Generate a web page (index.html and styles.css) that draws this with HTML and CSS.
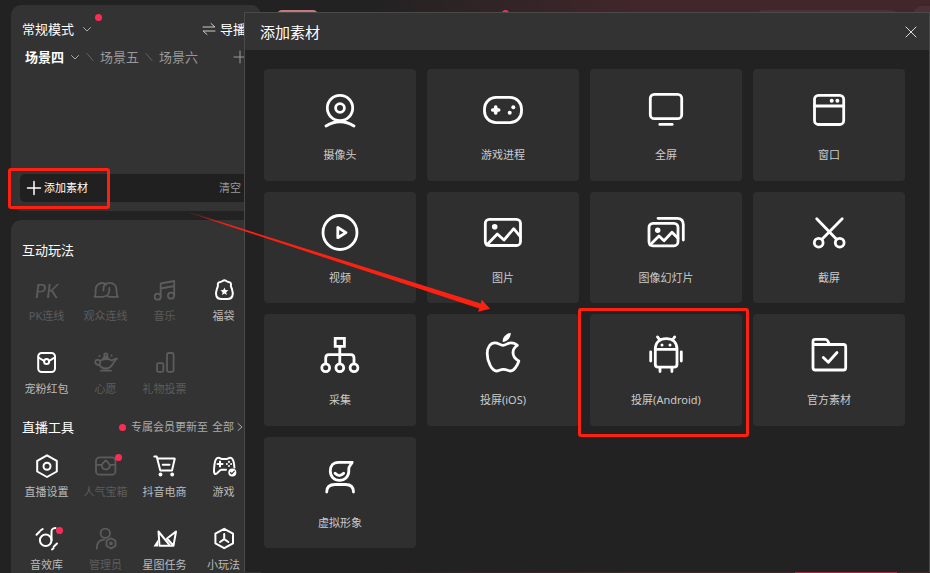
FILE: index.html
```html
<!DOCTYPE html>
<html lang="zh-CN">
<head>
<meta charset="utf-8">
<title>添加素材</title>
<link rel="stylesheet" href="styles.css">
</head>
<body>
<div class="app">
  <aside class="sidebar">
    <section class="panel scenes">
      <div class="mode-row">
        <button class="mode">常规模式
          <svg class="chevron" viewBox="0 0 10 10"><path d="M1.5 3.5 5 7l3.5-3.5"/></svg>
          <i class="dot dot-mode"></i>
        </button>
        <button class="director"><svg class="swap" viewBox="0 0 14 14"><path d="M1 5H13L9 1.5M13 9H1l4 3.5"/></svg>导播</button>
      </div>
      <div class="scene-row">
        <button class="scene current">场景四</button>
        <svg class="chevron" viewBox="0 0 10 10"><path d="M1.5 3.5 5 7l3.5-3.5"/></svg>
        <svg class="slash" viewBox="0 0 8 10"><path d="M1 1.5 7 8.5"/></svg>
        <button class="scene">场景五</button>
        <svg class="slash" viewBox="0 0 8 10"><path d="M1 1.5 7 8.5"/></svg>
        <button class="scene">场景六</button>
        <button class="add-scene" aria-label="+"><svg viewBox="0 0 12 12"><path d="M6 0V12M0 6H12"/></svg></button>
      </div>
      <div class="source-bar">
        <button class="add-source"><svg viewBox="0 0 14 14"><path d="M7 .5V13.5M.5 7H13.5"/></svg>添加素材</button>
        <button class="clear">清空</button>
      </div>
    </section>

    <section class="panel tools">
      <h2>互动玩法</h2>
      <div class="tool-grid">
        <button class="tool off"><span class="pk">PK</span>PK连线</button>
        <button class="tool off"><svg viewBox="0 0 27 28"><path d="M14.3 8.700C13.300 7.600 12 7 10 7 6.500 7 3.600 9.800 3.600 14 3.600 17 4 19.500 2.500 20.800H10.500C14.500 20.800 17.300 18 17.300 14V12M11.500 14.500V12.500C11.500 9 14 6.800 17.500 6.800 22 6.800 24.500 10 24.500 14 24.500 17 24.500 19 26 20.800H18.500C17 20.800 16 20.500 15.300 20"/></svg>观众连线</button>
        <button class="tool off"><svg viewBox="0 0 27 28"><circle cx="6.700" cy="20.700" r="3"/><circle cx="20" cy="19.700" r="3"/><path d="M9.700 20.500V7.500L23.200 5V19.500M9.700 12.500 23.200 10"/></svg>音乐</button>
        <button class="tool"><svg viewBox="0 0 27 28"><path d="M14.400 4.300c-1.700 0-2 1.400-4 1.600-2.200.2-3 1.500-2.500 3.400.3 1.200-.3 1.700-1 3.500-1.800 5.200-1 10.200 4.200 10.200h6.600c5.200 0 6-5 4.200-10.200-.7-1.800-1.300-2.300-1-3.500.5-1.900-.3-3.200-2.500-3.400-2-.2-2.300-1.600-4-1.600z"/><path class="solid" d="m14.400 11.500 1.100 2.500 2.800.3-2.100 1.900.6 2.700-2.400-1.400L12 18.900l.6-2.700-2.100-1.900 2.800-.3z"/></svg>福袋</button>
        <button class="tool"><svg viewBox="0 0 27 28"><rect x="5.200" y="4" width="16.800" height="19" rx="3.500"/><path d="M5.500 8.500 11 11.800M21.700 8.500 16.200 11.800"/><circle cx="13.600" cy="12.500" r="2.500"/></svg>宠粉红包</button>
        <button class="tool off"><svg viewBox="0 0 27 28"><path d="M8 12c3-2.500 9-2.500 12-.5 1.500-1.500 3-1.500 5-2-2 1.500-3 4-4.500 6-2 3-4 4-6.500 4s-5-.5-6.500-3.500C4.500 16 3 14.500 3.300 12.500 3.700 10 7 10.500 8 12c.3 1.500 0 3-.5 4M11 9.500c0-1.500 5.500-1.500 5.500 0M9 21.700h10"/><circle cx="13.800" cy="6" r="1.600"/><path d="M7.500 7v.2M19.500 6.500v.2"/></svg>心愿</button>
        <button class="tool off"><svg viewBox="0 0 27 28"><rect x="6" y="14.200" width="6.400" height="8.600" rx="1.500"/><rect x="16" y="4" width="6.600" height="18.800" rx="1.500"/></svg>礼物投票</button>
      </div>

      <div class="tools-head">
        <h2>直播工具</h2>
        <i class="dot"></i>
        <span class="notice">专属会员更新至</span>
        <a class="all" href="#">全部<svg viewBox="0 0 8 10"><path d="m2 1.500 4 3.500-4 3.500"/></svg></a>
      </div>
      <div class="tool-grid">
        <button class="tool"><svg viewBox="0 0 27 28"><path d="M14 3.300 23.800 8.800V19.500L14 25 4.200 19.500V8.800z"/><circle cx="14" cy="14.200" r="3.500"/></svg>直播设置</button>
        <button class="tool off"><svg viewBox="0 0 27 28"><rect x="4" y="5.300" width="19.400" height="17.400" rx="3.500"/><path d="M4 12.800H9.500M18 12.800h5.400M13.800 8.500c2 2 4 3 4 5a4 4 0 0 1-8 0c0-2 2-3 4-5z"/></svg><i class="dot dot-tool"></i>人气宝箱</button>
        <button class="tool"><svg viewBox="0 0 27 28"><path d="M3.300 4.500H5.700L9.300 18.500H21L23.800 6.600H7M11.700 12.700h6.800"/><circle class="solid" cx="9.500" cy="22.500" r="1.900"/><circle class="solid" cx="21.200" cy="22.500" r="1.900"/></svg>抖音电商</button>
        <button class="tool"><svg viewBox="0 0 27 28"><path d="M16 17.700H11.500C9 17.700 8 22 5.700 22 3.500 22 3.800 18 4.500 12.500 5 8 6 5.700 8.500 5.700c1.500 0 2 1.300 3.300 1.300h5c1.300 0 1.800-1.300 3.300-1.300 2.500 0 3.500 2.300 4 6.800l.3 3"/><path d="M10 9.500v5M7.500 12h5"/><path d="M19 9.800v.1M19 14v.1M16.900 12v.1M21.100 12v.1"/><circle class="solid" cx="22.300" cy="20.500" r="4"/><path class="cut" d="m20.500 20.500 1.300 1.400 2.500-2.700"/></svg>游戏</button>
        <button class="tool"><svg viewBox="0 0 27 28"><circle cx="12.700" cy="15.300" r="5.800"/><path d="M18.500 15.300V7c0-3 1-3.800 4-4M3.500 9.800 6.700 6.500M7.500 5.500 9.700 4M19 24.500 20.500 23.300M20.700 21.700 24 18.500"/></svg><i class="dot dot-tool"></i>音效库</button>
        <button class="tool off"><svg viewBox="0 0 27 28"><circle cx="13.300" cy="8.300" r="4.700"/><path d="M4.700 23.500C4.700 18 7.500 15 12 14.700M19 13.300 23.500 15.800V20.900L19 23.500 14.500 20.900V15.800z"/><circle cx="19" cy="18.400" r="1"/></svg>管理员</button>
        <button class="tool"><svg viewBox="0 0 27 28"><path d="M7.500 6.500 19 20.700H8.500zM25 6.500 16 13.500 22.500 20.700zM13.500 20.700h9"/><path class="solid" d="M2.500 21.500 7 14.500v7z"/></svg>星图任务</button>
        <button class="tool"><svg viewBox="0 0 27 28"><path d="M14.200 3.800 23 8.700V18.300L14.200 23.200 5.400 18.300V8.700zM14.200 9v5.200L10 17M14.200 14.200l4.200 2.800"/></svg>小玩法</button>
      </div>
    </section>
  </aside>

  <div class="stage">
    <div class="stage-top">
      <i class="avatar-edge"></i><i class="dot live"></i><i class="search-edge"></i><i class="round-edge"></i>
    </div>
    <i class="go-live"></i>
  </div>

  <div class="dialog" role="dialog" aria-labelledby="dialog-title">
    <header class="dialog-head">
      <h1 id="dialog-title">添加素材</h1>
      <button class="close" aria-label="关闭"><svg viewBox="0 0 12 12"><path d="M1 1 11 11M11 1 1 11"/></svg></button>
    </header>
    <div class="tiles">
      <button class="tile"><svg viewBox="0 0 48 48"><circle cx="24" cy="22" r="12.700"/><circle cx="24" cy="22" r="4.400"/><path d="M10 40Q24 31.500 38 40"/></svg>摄像头</button>
      <button class="tile"><svg viewBox="0 0 48 48"><rect x="5.500" y="11.300" width="37" height="25.400" rx="11.500"/><path class="thick" d="M16.700 21v6M13.700 24h6"/><circle class="solid" cx="34.300" cy="21.300" r="2"/><circle class="solid" cx="30.700" cy="26.700" r="2"/></svg>游戏进程</button>
      <button class="tile"><svg viewBox="0 0 48 48"><rect x="8.300" y="8.300" width="31.400" height="24.400" rx="4"/><path d="M17.800 38.400H30.200"/></svg>全屏</button>
      <button class="tile"><svg viewBox="0 0 48 48"><rect x="9.500" y="9.300" width="29.200" height="29.200" rx="4"/><path d="M9.500 20H38.500"/><circle class="solid" cx="26.700" cy="14.700" r="2"/><circle class="solid" cx="32.400" cy="14.700" r="2"/></svg>窗口</button>
      <button class="tile"><svg viewBox="0 0 48 48"><circle cx="24" cy="23.500" r="17"/><path d="M21.800 18.500V28.700L30 23.600z"/></svg>视频</button>
      <button class="tile"><svg viewBox="0 0 48 48"><rect x="6.300" y="10.300" width="35.200" height="26.200" rx="4"/><circle class="solid" cx="15.700" cy="17.700" r="2.800"/><path d="M7.700 36 18.300 25 25 31 34.700 19.700 41.300 27.700"/></svg>图片</button>
      <button class="tile"><svg viewBox="0 0 48 48"><rect x="7" y="14.300" width="29" height="22.500" rx="4"/><circle class="solid" cx="15.700" cy="21.300" r="2.700"/><path d="M8 36 17 27 22 31.700 30 23.300 36 29.300M16 9.300H35Q41.300 9.300 41.300 15.500V31"/></svg>图像幻灯片</button>
      <button class="tile"><svg viewBox="0 0 48 48"><circle cx="13.700" cy="33.700" r="4.400"/><circle cx="34.700" cy="33.700" r="4.400"/><path d="M37.200 9.700 17 30.300M11.700 9.700 31.500 30.300"/></svg>截屏</button>
      <button class="tile"><svg viewBox="0 0 48 48"><path class="square" d="M19.200 7.300h9.200v8h-9.200z"/><path d="M23.800 16V32M9.700 32V27Q9.700 23.700 13 23.700H34.700Q38 23.700 38 27V32"/><circle cx="9.700" cy="36.700" r="3.900"/><circle cx="23.800" cy="36.700" r="3.900"/><circle cx="38" cy="36.700" r="3.900"/></svg>采集</button>
      <button class="tile"><svg viewBox="0 0 48 48"><path d="M24 14.300C21 14.300 19.500 11.800 16 11.800 11.500 11.800 8.200 16 8.200 22.500 8.200 31 13 40 17.500 40 20 40 21 38.300 24.500 38.300S29 40 31.500 40C35 40 38.500 34.500 39.800 30 36 28 34 25.500 34 21.500 34 18 36 15.800 38.300 14.300 36.500 12.300 34.500 11.800 32 11.800 28.500 11.800 27 14.300 24 14.300z"/><path class="solid" d="M31.700 1.700C32 6 29 10.500 23.700 11 23.300 6.500 27 2.700 31.700 1.700z"/></svg>投屏(iOS)</button>
      <button class="tile marked"><svg viewBox="0 0 48 48"><path d="M13.300 18.300C13.300 11 18 7.600 24.200 7.600S35 11 35 18.300V33.200Q35 36.200 32 36.200H16.300Q13.300 36.200 13.300 33.200zM13.300 18.300H35M15.500 5.900 18 9.200M32.700 5.900 30.300 9.200M8.700 20.800V30M39.300 20.800V30M18 36.500V40.500M29.900 36.500V40.500"/><circle class="solid" cx="20" cy="14" r="1.500"/><circle class="solid" cx="28" cy="14" r="1.500"/></svg>投屏(Android)</button>
      <button class="tile"><svg viewBox="0 0 48 48"><path d="M8 36.500V10.500Q8 8.300 10.200 8.300H20.300Q22 8.300 22.800 10L24.500 13.500H38.500Q40.700 13.500 40.700 15.700V36.800Q40.700 39 38.500 39H10.200Q8 39 8 36.800M8 13.500H24.500M18.300 26.500 23.300 31.300 32 21.500"/></svg>官方素材</button>
      <button class="tile"><svg viewBox="0 0 48 48"><path d="M36.200 8.300H22.500C17 8.300 14.300 12 14.300 17 14.300 22.500 18 26.400 23.500 26.400S32.800 22.500 32.800 17V14.500C32.800 12.500 34.800 11 36.200 8.300zM19 19.300Q23.300 23.800 27.700 19.300M10.700 38C10.700 33 14 30.500 19 30.500H29.500C34.300 30.500 37.500 33 37.500 38"/></svg>虚拟形象</button>
    </div>
  </div>

  <svg class="arrow" viewBox="0 0 300 100">
    <defs><linearGradient id="fade" x1="0" x2="1"><stop offset="0" stop-color="#fe2111" stop-opacity=".1"/><stop offset=".12" stop-color="#fe2111"/></linearGradient></defs>
    <path fill="url(#fade)" d="M0 2.300 290.700 93.500 291.700 89.800 300 98.700 288 101.700 289.300 98.500 0 3.300z"/>
  </svg>
</div>
</body>
</html>
```
FILE: styles.css
```css
* {
  box-sizing: border-box;
}

body {
  margin: 0;
  background: #222;
  color: #fff;
  font: 11px/16px "Noto Sans", "Noto Sans CJK SC", sans-serif;
}

button {
  padding: 0;
  border: 0;
  background: none;
  color: inherit;
  font: inherit;
}

h1,
h2 {
  margin: 0;
  font-weight: 400;
}

h2 {
  font-size: 13px;
  line-height: 20px;
}

svg {
  display: block;
  flex: none;
  fill: none;
  stroke: currentColor;
  stroke-linecap: round;
  stroke-linejoin: round;
  overflow: visible;
}

svg .solid {
  fill: currentColor;
  stroke: none;
}

.app {
  position: relative;
  display: flex;
  gap: 10px;
  height: 100vh;
  padding-left: 11px;
  overflow: hidden;
}

.sidebar {
  display: flex;
  flex: none;
  flex-direction: column;
  gap: 9px;
  width: 250px;
  padding-top: 5px;
}

.panel {
  border-radius: 10px;
  background: #333;
}

.dot {
  flex: none;
  width: 7px;
  height: 7px;
  border-radius: 50%;
  background: #fe2c55;
}

/* Scene panel */

.scenes {
  display: flex;
  flex: none;
  flex-direction: column;
  min-height: 206px;
  padding: 14px 0 9px 11px;
}

.mode-row,
.scene-row,
.mode,
.director {
  display: flex;
  align-items: center;
}

.mode-row {
  justify-content: space-between;
  padding-right: 15px;
  font-size: 13px;
  line-height: 20px;
}

.mode {
  position: relative;
  gap: 8px;
}

.dot-mode {
  position: absolute;
  top: -5px;
  right: -10px;
}

.chevron {
  width: 10px;
  height: 10px;
  color: #aaa;
}

.director {
  gap: 4px;
}

.swap {
  width: 14px;
  height: 14px;
  color: #ccc;
}

.scene-row {
  gap: 6px;
  margin-top: 8px;
  padding: 0 15px 0 3px;
  color: #999;
  font-size: 13px;
  line-height: 20px;
}

.current {
  color: #fff;
  font-weight: 700;
}

.slash {
  width: 8px;
  height: 10px;
  color: #666;
}

.add-scene {
  margin-left: auto;
}

.add-scene svg {
  width: 12px;
  height: 12px;
}

.source-bar {
  display: flex;
  justify-content: space-between;
  margin-top: auto;
  margin-left: -2px;
  border-radius: 5px;
  background: #202020;
}

.add-source {
  position: relative;
  display: flex;
  align-items: center;
  gap: 3px;
  padding: 6px 16px 6px 7px;
}

.add-source svg {
  width: 14px;
  height: 14px;
  stroke-width: 1.5px;
}

.add-source::after,
.marked::after {
  position: absolute;
  border: 3px solid #fe2111;
  border-radius: 3px;
  content: "";
}

.add-source::after {
  inset: -6px -6px -7px -12px;
}

.clear {
  padding-right: 20px;
  color: #999;
}

/* Tool panel */

.tools {
  flex: none;
  padding: 20px 8px 12px 6px;
}

.tools > h2 {
  padding-left: 5px;
}

.tool-grid {
  display: grid;
  grid-template-columns: repeat(4, 1fr);
  row-gap: 25px;
  margin-top: 16px;
}

.tool {
  position: relative;
  display: flex;
  flex-direction: column;
  gap: 4px;
  align-items: center;
  color: #bbb;
  white-space: nowrap;
}

.tool svg {
  width: 27px;
  height: 28px;
  color: #fff;
  stroke-width: 2px;
}

.tool.off,
.tool.off svg {
  color: #5c5c5c;
}

.tool.off svg {
  stroke-width: 1.8px;
}

.tool .cut {
  stroke: #333;
  stroke-width: 1.2px;
}

.pk {
  font: italic 400 20px/28px Lato, sans-serif;
}

.dot-tool {
  position: absolute;
  top: 2px;
  right: 13px;
}

.tools-head {
  display: flex;
  align-items: center;
  margin-top: 20px;
  padding-left: 5px;
  color: #aaa;
}

.tools-head h2 {
  margin-right: auto;
  color: #fff;
}

.tools-head + .tool-grid {
  margin-top: 15px;
}

.notice {
  margin: 0 4px 0 5px;
}

.all {
  display: flex;
  gap: 2px;
  align-items: center;
  padding-right: 9px;
  color: inherit;
  text-decoration: none;
}

.all svg {
  width: 8px;
  height: 10px;
}

/* Live preview behind the dialog */

.stage {
  display: flex;
  flex: 1;
  flex-direction: column;
  justify-content: space-between;
  background: linear-gradient(90deg, #222 15%, #41262b 55%);
}

.stage-top {
  display: flex;
  align-items: flex-start;
  height: 24px;
  padding: 10px 0 0 6px;
}

.avatar-edge {
  width: 41px;
  height: 14px;
  border-radius: 5px;
  background: #c5787d;
}

.live {
  margin-left: 184px;
}

.search-edge {
  width: 142px;
  height: 14px;
  margin-right: 15px;
  margin-left: auto;
  border-radius: 7px;
  background: #4b3035;
}

.round-edge {
  width: 17px;
  height: 18px;
  margin-top: -4px;
  border-radius: 10px 0 0 10px;
  background: #4b3035;
}

.go-live {
  align-self: flex-end;
  width: 102px;
  height: 4px;
  margin-right: 33px;
  background: #a42c46;
}

/* Dialog */

.dialog {
  position: absolute;
  inset: 12px 0 1px 244px;
  display: flex;
  flex-direction: column;
  border: 1px solid #4a4a4a;
  border-bottom: 0;
  background: #222;
}

.dialog-head {
  display: flex;
  align-items: center;
  justify-content: space-between;
  height: 37px;
  padding: 0 12px 0 15px;
  background: #333;
}

.dialog-head h1 {
  font-size: 15px;
  line-height: 20px;
}

.close svg {
  width: 12px;
  height: 12px;
  color: #ddd;
}

.tiles {
  display: grid;
  flex: 1;
  grid-template-columns: repeat(4, 1fr);
  grid-auto-rows: 1fr;
  gap: 11px;
  padding: 19px 24px 24px 19px;
}

.tile {
  position: relative;
  display: flex;
  flex-direction: column;
  gap: 13px;
  align-items: center;
  justify-content: center;
  border-radius: 4px;
  background: #2f2f2f;
  color: #ccc;
}

.tile svg {
  width: 48px;
  height: 48px;
  color: #fff;
  stroke-width: 2.8px;
}

.tile .thick {
  stroke-width: 3.6px;
}

.tile .square {
  stroke-linejoin: miter;
}

.marked::after {
  inset: -6px -7px -11px -12px;
}

/* Pointer from the add button to the marked tile */

.arrow {
  position: absolute;
  top: 210px;
  left: 190px;
  width: 300px;
  height: 100px;
  stroke: none;
  pointer-events: none;
}
```
